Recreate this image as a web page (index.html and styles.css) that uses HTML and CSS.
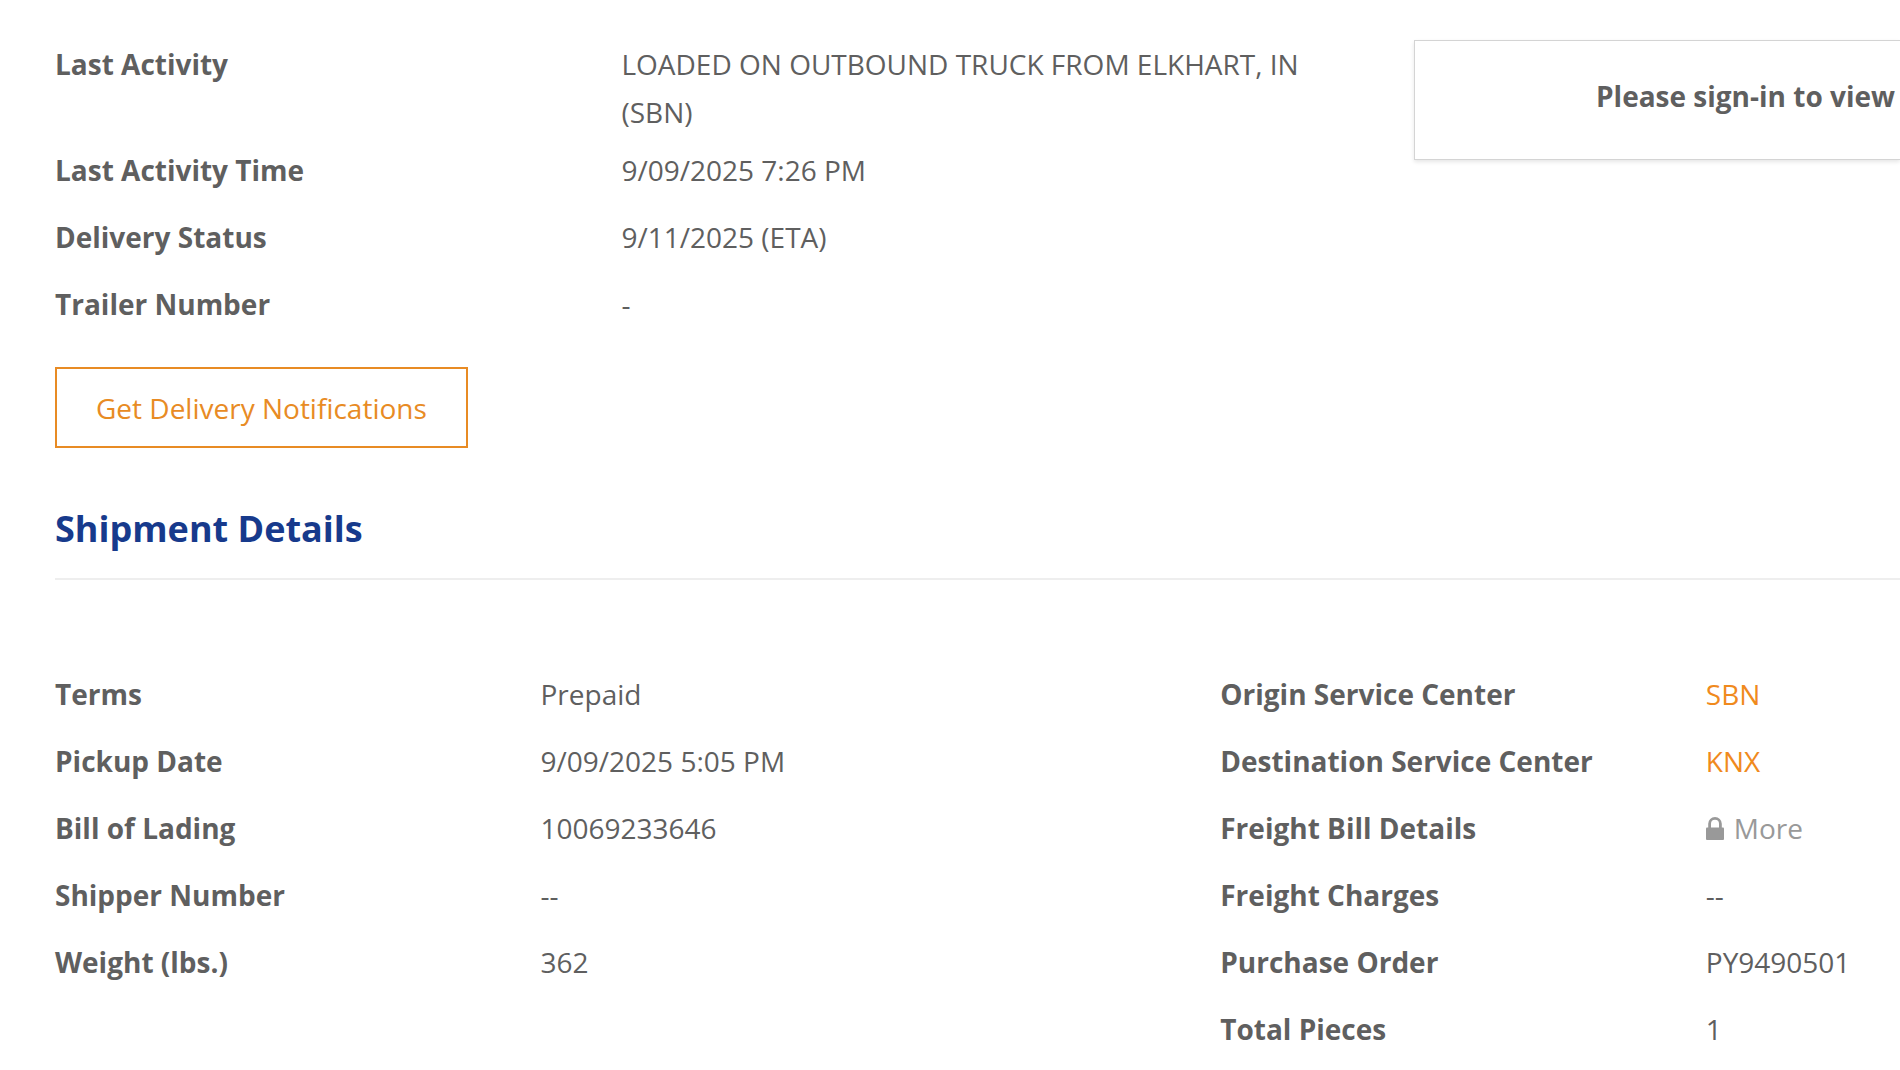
FILE: index.html
```html
<!DOCTYPE html>
<html lang="en">
<head>
  <meta charset="UTF-8" />
  <meta name="viewport" content="width=device-width, initial-scale=1.0"/>
  <title>Shipment Details</title>
  <link rel="stylesheet" href="styles.css">
</head>
<body>
  <main class="page">
    <section class="status">
      <div>
        <dl class="list">
          <div class="row"><dt>Last Activity</dt><dd>LOADED ON OUTBOUND TRUCK FROM ELKHART, IN (SBN)</dd></div>
          <div class="row"><dt>Last Activity Time</dt><dd>9/09/2025 7:26 PM</dd></div>
          <div class="row"><dt>Delivery Status</dt><dd>9/11/2025 (ETA)</dd></div>
          <div class="row"><dt>Trailer Number</dt><dd>-</dd></div>
        </dl>
        <button type="button" class="btn">Get Delivery Notifications</button>
      </div>
      <aside class="signin">Please sign-in to view</aside>
    </section>

    <h2>Shipment Details</h2>

    <section class="details">
      <dl class="list">
        <div class="row"><dt>Terms</dt><dd>Prepaid</dd></div>
        <div class="row"><dt>Pickup Date</dt><dd>9/09/2025 5:05 PM</dd></div>
        <div class="row"><dt>Bill of Lading</dt><dd>10069233646</dd></div>
        <div class="row"><dt>Shipper Number</dt><dd>--</dd></div>
        <div class="row"><dt>Weight (lbs.)</dt><dd>362</dd></div>
      </dl>
      <dl class="list list-right">
        <div class="row"><dt>Origin Service Center</dt><dd><a href="#">SBN</a></dd></div>
        <div class="row"><dt>Destination Service Center</dt><dd><a href="#">KNX</a></dd></div>
        <div class="row">
          <dt>Freight Bill Details</dt>
          <dd>
            <a href="#" class="locked">
              <svg class="lock" viewBox="0 0 18 23" aria-hidden="true">
                <path d="M3.6 11V6.8a5.4 5.4 0 0 1 10.8 0V11" fill="none" stroke="currentColor" stroke-width="2.8"/>
                <rect y="10.5" width="18" height="12.5" rx="1" fill="currentColor"/>
              </svg>
              More
            </a>
          </dd>
        </div>
        <div class="row"><dt>Freight Charges</dt><dd>--</dd></div>
        <div class="row"><dt>Purchase Order</dt><dd>PY9490501</dd></div>
        <div class="row"><dt>Total Pieces</dt><dd>1</dd></div>
      </dl>
    </section>
  </main>
</body>
</html>
```

FILE: styles.css
```css
* {
  box-sizing: border-box;
}
body {
  margin: 0;
  background: #fff;
  color: #5f5f5f;
  font-family: "Open Sans", sans-serif;
  font-size: 28px;
  line-height: 48px;
}
.page {
  padding: 40px 0 0 55px;
}
.status {
  display: grid;
  grid-template-columns: 14fr 5fr;
  align-items: start;
}
.list {
  margin: 0;
}
.row {
  display: grid;
  grid-template-columns: 5fr 7fr;
  min-height: 67px;
  padding-bottom: 10px;
}
.list-right .row {
  grid-template-columns: 5fr 2fr;
}
dt {
  font-weight: bold;
}
dd {
  margin: 0;
  padding-right: 40px;
}
a {
  color: #f08a1d;
  text-decoration: none;
}
.btn {
  display: block;
  margin-top: 20px;
  padding: 15px 39px 14px;
  background: #fff;
  color: #e88b24;
  border: 2px solid #e88b24;
  font: inherit;
  cursor: pointer;
}
.signin {
  padding: 31px 5px 39px;
  border: 1px solid #d4d4d4;
  border-right: none;
  box-shadow: 0 2px 4px rgba(0,0,0,0.1);
  font-weight: bold;
  text-align: right;
  white-space: nowrap;
}
h2 {
  margin: 57px 0 90px;
  padding-bottom: 25px;
  border-bottom: 2px solid #eee;
  color: #173a8c;
  font-size: 36px;
}
.details {
  display: grid;
  grid-template-columns: 12fr 7fr;
}
.locked {
  display: flex;
  align-items: center;
  gap: 10px;
  color: #999;
}
.lock {
  width: 18px;
  height: 23px;
}
```
